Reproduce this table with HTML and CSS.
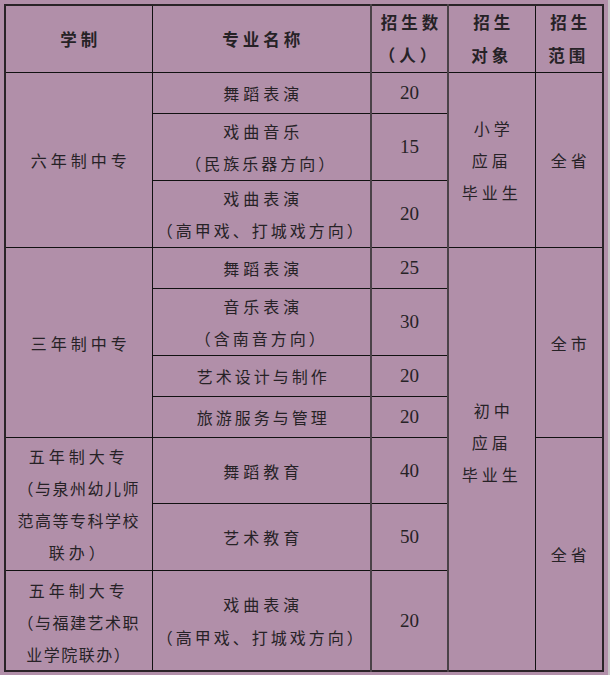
FILE: index.html
```html
<!DOCTYPE html>
<html lang="zh-CN">
<head>
<meta charset="utf-8">
<title>招生计划</title>
<link rel="stylesheet" href="styles.css">
</head>
<body>
<table class="plan">
  <colgroup>
    <col class="c1"><col class="c2"><col class="c3"><col class="c4"><col class="c5">
  </colgroup>
  <thead>
    <tr class="h66">
      <th>学制</th>
      <th>专业名称</th>
      <th class="num-h">招生数<br>（人）</th>
      <th class="gl">招生<br>对象</th>
      <th>招生<br>范围</th>
    </tr>
  </thead>
  <tbody>
    <tr class="h41">
      <td rowspan="3">六年制中专</td>
      <td>舞蹈表演</td>
      <td class="num">20</td>
      <td rowspan="3" class="gl">小学<br>应届<br>毕业生</td>
      <td rowspan="3">全省</td>
    </tr>
    <tr class="h67">
      <td>戏曲音乐<br><span class="long">（民族乐器方向）</span></td>
      <td class="num">15</td>
    </tr>
    <tr class="h67">
      <td>戏曲表演<br><span class="long">（高甲戏、打城戏方向）</span></td>
      <td class="num">20</td>
    </tr>
    <tr class="h41">
      <td rowspan="4">三年制中专</td>
      <td>舞蹈表演</td>
      <td class="num">25</td>
      <td rowspan="8" class="gl junior">初中<br>应届<br>毕业生</td>
      <td rowspan="4">全市</td>
    </tr>
    <tr class="h67">
      <td>音乐表演<br><span class="long">（含南音方向）</span></td>
      <td class="num">30</td>
    </tr>
    <tr class="h41">
      <td><span class="mid">艺术设计与制作</span></td>
      <td class="num">20</td>
    </tr>
    <tr class="h41">
      <td><span class="mid">旅游服务与管理</span></td>
      <td class="num">20</td>
    </tr>
    <tr class="h66">
      <td rowspan="2" class="c1txt">五年制大专<br><span class="tight">（与泉州幼儿师</span><br><span class="tight">范高等专科学校</span><br>联办）</td>
      <td>舞蹈教育</td>
      <td class="num">40</td>
      <td rowspan="3">全省</td>
    </tr>
    <tr class="h67">
      <td>艺术教育</td>
      <td class="num">50</td>
    </tr>
    <tr class="h100">
      <td class="c1txt last">五年制大专<br><span class="tight">（与福建艺术职</span><br><span class="tight">业学院联办）</span></td>
      <td class="lh34">戏曲表演<br><span class="long">（高甲戏、打城戏方向）</span></td>
      <td class="num">20</td>
    </tr>
  </tbody>
</table>
</body>
</html>
```

FILE: styles.css
```css
html {
  background: #c7c3c6;
  margin: 0;
  padding: 0;
}

body {
  margin: 0;
  padding: 4px;
  width: 600px;
  min-height: 667px;
  background: #b18fa9;
  font-family: "Noto Sans CJK SC", "Noto Sans", sans-serif;
  color: #262226;
}

.plan {
  border-collapse: collapse;
  table-layout: fixed;
  width: 598px;
  border: 2px solid #2a2428;
}

.c1 { width: 147px; }
.c2 { width: 219px; }
.c3 { width: 77px; }
.c4 { width: 87px; }
.c5 { width: 68px; }

.plan th,
.plan td {
  border: 1px solid #111;
  padding: 0;
  text-align: center;
  vertical-align: middle;
  font-size: 16px;
  font-weight: 400;
  line-height: 32px;
  letter-spacing: 4px;
  text-indent: 4px;
}

.plan th {
  font-weight: 700;
  font-size: 16.5px;
  line-height: 33px;
}

.plan th:nth-child(3),
.plan td.num {
  border-left: 2px solid #4a4248;
  border-right: 2px solid #4a4248;
}

.plan td.num {
  font-family: "Liberation Serif", "DejaVu Serif", serif;
  font-size: 19px;
  letter-spacing: 0;
  text-indent: 0;
}

.gl {
  border-left: 2px solid #4a4248;
}

.junior {
  padding-bottom: 34px !important;
}

.long {
  letter-spacing: 3px;
}

.mid {
  letter-spacing: 3px;
}

.tight {
  letter-spacing: 1.5px;
}

.c1txt {
  text-indent: 0 !important;
}

.last {
  line-height: 32px !important;
  padding-top: 3px !important;
}

.lh34 {
  line-height: 33px !important;
}

.h41 { height: 41px; }
.h66 { height: 66px; }
.h67 { height: 67px; }
.h100 { height: 100px; }
```
